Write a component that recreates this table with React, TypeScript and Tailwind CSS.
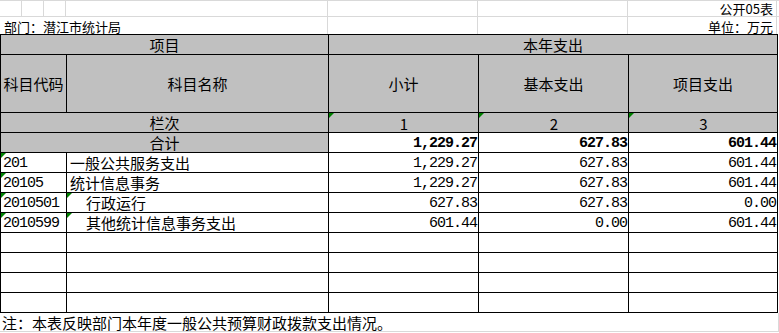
const cjk = "font-['Noto_Sans_CJK_SC',sans-serif]";
const mono = "font-['Liberation_Mono','Noto_Sans_CJK_SC',monospace] text-[15px] leading-[15px] tracking-[-1px]";

type Row = { code: string; name: string; indent?: boolean; mark?: boolean; v: [string, string, string] };

const rows: Row[] = [
  { code: '201', name: '一般公共服务支出', v: ['1,229.27', '627.83', '601.44'] },
  { code: '20105', name: '统计信息事务', v: ['1,229.27', '627.83', '601.44'] },
  { code: '2010501', name: '行政运行', indent: true, mark: true, v: ['627.83', '627.83', '0.00'] },
  { code: '2010599', name: '其他统计信息事务支出', indent: true, mark: true, v: ['601.44', '0.00', '601.44'] },
];

function Mark() {
  return (
    <span className="absolute left-0 top-0 h-0 w-0 border-t-[5px] border-r-[5px] border-t-[#008000] border-r-transparent" />
  );
}

const cell = 'relative border-r border-b border-black overflow-hidden whitespace-nowrap';
const head = `${cell} bg-[#c0c0c0] ${cjk} text-[15px] leading-[15px] text-black`;

export default function App() {
  return (
    <div className="w-[779px] h-[333px] bg-white text-black overflow-hidden">
      {/* sheet heading rows */}
      <div className={`grid grid-cols-[22px_22px_22px_262px_150px_150px_149px] h-[17px] border-t border-b border-[#d9d9d9] ${cjk} text-[13px] leading-[13px]`}>
        <div className="border-r border-[#d9d9d9]" />
        <div className="border-r border-[#d9d9d9]" />
        <div className="border-r border-[#d9d9d9]" />
        <div className="border-r border-[#d9d9d9]" />
        <div className="border-r border-[#d9d9d9]" />
        <div className="border-r border-[#d9d9d9]" />
        <div className="flex items-end justify-end pr-[3px] pb-[1px] border-r border-[#d9d9d9]">公开05表</div>
      </div>
      <div className={`grid grid-cols-[328px_150px_150px_149px] h-[17px] ${cjk} text-[13px] leading-[13px]`}>
        <div className="flex items-end pl-[4px] pb-[1px] border-r border-[#d9d9d9] whitespace-nowrap">部门：潜江市统计局</div>
        <div className="border-r border-[#d9d9d9]" />
        <div className="border-r border-[#d9d9d9]" />
        <div className="flex items-end justify-end pr-[3px] pb-[1px] border-r border-[#d9d9d9]">单位：万元</div>
      </div>

      {/* table */}
      <div className="grid w-[778px] grid-cols-[66px_262px_150px_150px_149px] grid-rows-[20px_58px_20px_20px_repeat(8,20px)] border-l border-t border-black">
        <div className={`${head} col-span-2 flex items-end justify-center pb-[2px]`}>项目</div>
        <div className={`${head} col-span-3 flex items-end justify-center pb-[2px]`}>本年支出</div>

        <div className={`${head} flex items-center justify-center`}>科目代码</div>
        <div className={`${head} flex items-center justify-center`}>科目名称</div>
        <div className={`${head} flex items-center justify-center`}>小计</div>
        <div className={`${head} flex items-center justify-center`}>基本支出</div>
        <div className={`${head} flex items-center justify-center`}>项目支出</div>

        <div className={`${head} col-span-2 flex items-end justify-center pb-[2px]`}>栏次</div>
        {['1', '2', '3'].map((n) => (
          <div key={n} className={`${head} ${mono} flex items-end justify-center pb-[1px]`}>
            <Mark />
            {n}
          </div>
        ))}

        <div className={`${head} col-span-2 flex items-end justify-center pb-[2px]`}>合计</div>
        {['1,229.27', '627.83', '601.44'].map((n, i) => (
          <div key={i} className={`${cell} ${mono} font-bold flex items-end justify-end pr-[1px] pb-[1px]`}>
            {n}
          </div>
        ))}

        {rows.map((r) => (
          <div key={r.code} className="contents">
            <div className={`${cell} ${mono} flex items-end pl-[2px] pb-[1px]`}>
              <Mark />
              {r.code}
            </div>
            <div className={`${cell} ${cjk} text-[15px] leading-[15px] flex items-end pb-[2px] ${r.indent ? 'pl-[19px]' : 'pl-[3px]'}`}>
              {r.mark && <Mark />}
              {r.name}
            </div>
            {r.v.map((n, i) => (
              <div key={i} className={`${cell} ${mono} flex items-end justify-end pr-[1px] pb-[1px]`}>
                {n}
              </div>
            ))}
          </div>
        ))}

        {Array.from({ length: 4 }).map((_, k) => (
          <div key={k} className="contents">
            <div className={cell} />
            <div className={cell} />
            <div className={cell} />
            <div className={cell} />
            <div className={cell} />
          </div>
        ))}
      </div>

      <div className={`h-[19px] w-[779px] border-b border-r border-[#d9d9d9] flex items-end pl-[2px] pb-[1px] ${cjk} text-[15px] leading-[15px] whitespace-nowrap`}>
        注：本表反映部门本年度一般公共预算财政拨款支出情况。
      </div>
    </div>
  );
}
